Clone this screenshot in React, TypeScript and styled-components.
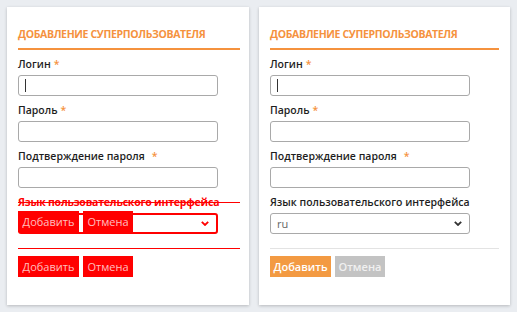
import React from "react";
import styled, { createGlobalStyle, css } from "styled-components";

const ORANGE = "#f5923e";
const RED = "#ff0000";

const GlobalStyle = createGlobalStyle`
  html, body {
    margin: 0;
    padding: 0;
    background: #eaedf1;
    font-family: "Open Sans", "Liberation Sans", sans-serif;
  }
`;

const Page = styled.div`
  display: flex;
  flex-direction: row;
  align-items: flex-start;
  gap: 10px;
  padding: 7px;
`;

const Panel = styled.div<{ $width: number; $padRight: number }>`
  box-sizing: border-box;
  width: ${({ $width }) => $width}px;
  height: 298px;
  background: #fff;
  box-shadow: 0 1px 3px rgba(0, 0, 0, 0.22);
  padding: 20px ${({ $padRight }) => $padRight}px 0 11px;
  display: flex;
  flex-direction: column;
`;

const Title = styled.h2`
  margin: 0;
  font-size: 10.5px;
  letter-spacing: -0.35px;
  line-height: 14px;
  font-weight: 700;
  color: ${ORANGE};
  text-transform: uppercase;
  padding-bottom: 7px;
  border-bottom: 2px solid ${ORANGE};
  margin-bottom: 6px;
`;

const Field = styled.div`
  display: flex;
  flex-direction: column;
  margin-bottom: 6px;
`;

const Label = styled.label<{ $broken?: boolean }>`
  position: relative;
  display: block;
  font-size: 10.5px;
  line-height: 16px;
  font-weight: 600;
  color: ${({ $broken }) => ($broken ? RED : "#1e1e1e")};
  margin-bottom: 3px;
  white-space: nowrap;
  ${({ $broken }) =>
    $broken &&
    css`
      font-weight: 700;
      letter-spacing: -0.2px;
      &::after {
        content: "";
        position: absolute;
        left: 0;
        right: 0;
        top: 8px;
        height: 1px;
        background: ${RED};
      }
    `}
`;

const Star = styled.span<{ $gap?: number }>`
  color: ${ORANGE};
  margin-left: ${({ $gap }) => $gap ?? 3}px;
`;

const InputBox = styled.div`
  position: relative;
  width: 200px;
`;

const Input = styled.input`
  box-sizing: border-box;
  display: block;
  width: 200px;
  height: 21px;
  margin: 0;
  border: 1px solid #a9a9a9;
  border-radius: 3px;
  background: #fff;
  outline: none;
  padding: 0 6px;
  font-family: inherit;
  font-size: 11px;
`;

const Caret = styled.span`
  position: absolute;
  left: 7px;
  top: 4px;
  width: 1px;
  height: 13px;
  background: #333;
`;

const Select = styled.div<{ $broken?: boolean }>`
  box-sizing: border-box;
  position: relative;
  width: 200px;
  height: 21px;
  border: ${({ $broken }) => ($broken ? `2px solid ${RED}` : "1px solid #a9a9a9")};
  border-radius: 3px;
  background: #fff;
  display: flex;
  align-items: center;
  justify-content: space-between;
  padding: 0 7px 0 6px;
  font-size: 11px;
  color: #666;
`;

const Chevron = styled.svg`
  width: 8px;
  height: 5px;
  display: block;
`;

const Divider = styled.div<{ $broken?: boolean }>`
  height: 1px;
  margin: 8px 0 7px;
  background: ${({ $broken }) => ($broken ? RED : "#e3e3e3")};
`;

const Buttons = styled.div<{ $overlay?: boolean }>`
  display: flex;
  flex-direction: row;
  gap: 4px;
  ${({ $overlay }) =>
    $overlay &&
    css`
      position: absolute;
      left: 0;
      top: -2px;
    `}
`;

const Button = styled.button<{ $kind: "primary" | "secondary" | "broken"; $w: number }>`
  box-sizing: border-box;
  width: ${({ $w }) => $w}px;
  height: 21px;
  border: 0;
  padding: 0;
  font-family: inherit;
  font-size: 11px;
  font-weight: ${({ $kind }) => ($kind === "broken" ? 400 : 600)};
  color: ${({ $kind }) =>
    $kind === "broken" ? "rgba(255,255,255,0.75)" : $kind === "secondary" ? "#f0f0f0" : "#fff"};
  background: ${({ $kind }) =>
    $kind === "primary" ? "#f39a42" : $kind === "secondary" ? "#c3c3c3" : RED};
`;

const ChevronIcon: React.FC<{ color: string }> = ({ color }) => (
  <Chevron viewBox="0 0 8 5">
    <path d="M0.8 0.8 L4 4 L7.2 0.8" fill="none" stroke={color} strokeWidth="1.8" />
  </Chevron>
);

const ButtonRow: React.FC<{ broken?: boolean; overlay?: boolean }> = ({ broken, overlay }) => (
  <Buttons $overlay={overlay}>
    <Button $kind={broken ? "broken" : "primary"} $w={61}>
      Добавить
    </Button>
    <Button $kind={broken ? "broken" : "secondary"} $w={50}>
      Отмена
    </Button>
  </Buttons>
);

const Form: React.FC<{ broken?: boolean }> = ({ broken }) => (
  <>
    <Title>Добавление суперпользователя</Title>
    <Field>
      <Label>
        Логин<Star>*</Star>
      </Label>
      <InputBox>
        <Input type="text" />
        <Caret />
      </InputBox>
    </Field>
    <Field>
      <Label>
        Пароль<Star>*</Star>
      </Label>
      <Input type="password" />
    </Field>
    <Field>
      <Label>
        Подтверждение пароля<Star $gap={7}>*</Star>
      </Label>
      <Input type="password" />
    </Field>
    <Field>
      <Label $broken={broken}>Язык пользовательского интерфейса</Label>
      <InputBox>
        <Select $broken={broken}>
          <span>{broken ? "" : "ru"}</span>
          <ChevronIcon color={broken ? RED : "#333"} />
        </Select>
        {broken && <ButtonRow broken overlay />}
      </InputBox>
    </Field>
    <Divider $broken={broken} />
    <ButtonRow broken={broken} />
  </>
);

export default function App() {
  return (
    <>
      <GlobalStyle />
      <Page>
        <Panel $width={242} $padRight={9}>
          <Form broken />
        </Panel>
        <Panel $width={251} $padRight={11}>
          <Form />
        </Panel>
      </Page>
    </>
  );
}
